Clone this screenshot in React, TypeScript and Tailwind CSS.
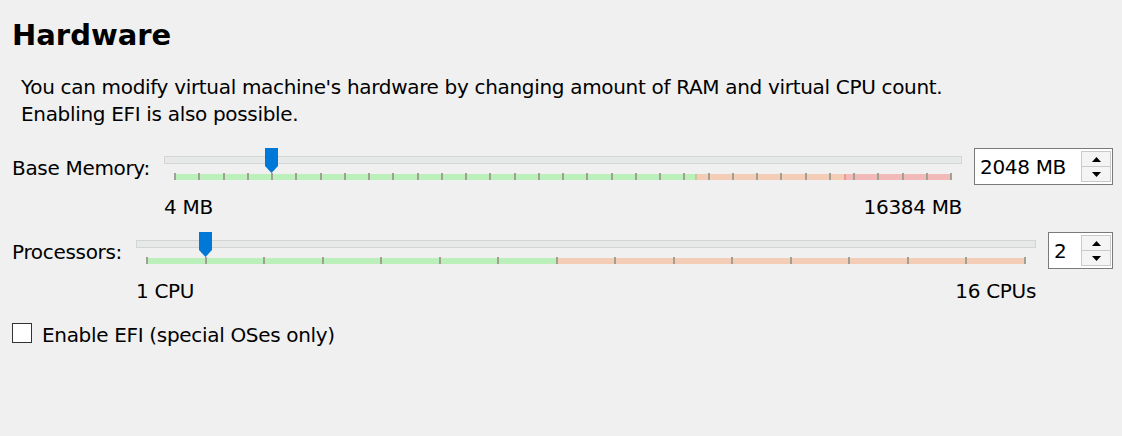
import React from "react";

type Seg = { w: number; color: string };

function Handle() {
  return (
    <svg width="13" height="25" viewBox="0 0 13 25" className="block">
      <polygon points="0,0 13,0 13,18 6.5,25 0,18" fill="#0078d7" />
    </svg>
  );
}

function Slider({
  frac,
  ticks,
  segments,
  marks,
  minLabel,
  maxLabel,
}: {
  frac: number;
  ticks: number;
  segments: Seg[];
  marks: { at: number; color: string }[];
  minLabel: string;
  maxLabel: string;
}) {
  return (
    <div className="flex-1 min-w-0 flex flex-col">
      <div className="relative h-[32px]">
        <div className="mt-[8px] h-[8px] border border-[#d3d5d5] bg-[#e7e9e9]" />
        <div className="relative mx-[10px] mt-[9px] h-[7px]">
          <div className="absolute left-0 right-0 top-[1px] h-[6px] flex">
            {segments.map((s, i) => (
              <div key={i} className="h-full" style={{ width: `${s.w * 100}%`, backgroundColor: s.color }} />
            ))}
          </div>
          {marks.map((m, i) => (
            <div
              key={i}
              className="absolute top-[1px] h-[6px] w-[2px]"
              style={{ left: `calc(${m.at * 100}% - 1px)`, backgroundColor: m.color }}
            />
          ))}
          <div className="absolute inset-0 flex justify-between">
            {Array.from({ length: ticks }).map((_, i) => (
              <div key={i} className="w-[2px] h-full bg-[#a29f95]" />
            ))}
          </div>
        </div>
        <div
          className="absolute top-0"
          style={{ left: `calc(10px + ${frac} * (100% - 22px) - 6px)` }}
        >
          <Handle />
        </div>
      </div>
      <div className="mt-[14px] flex justify-between leading-[27px]">
        <span>{minLabel}</span>
        <span>{maxLabel}</span>
      </div>
    </div>
  );
}

function Arrow({ up }: { up: boolean }) {
  return (
    <svg width="9" height="5" viewBox="0 0 9 5" className="block">
      {up ? <polygon points="4.5,0 9,5 0,5" fill="#000" /> : <polygon points="0,0 9,0 4.5,5" fill="#000" />}
    </svg>
  );
}

function Spin({ value, wide }: { value: string; wide: boolean }) {
  return (
    <div
      className={`${wide ? "w-[139px]" : "w-[65px]"} h-[37px] shrink-0 border border-[#7a7a7a] bg-white flex`}
    >
      <div className="flex-1 min-w-0 pl-[5px] pt-[5px] leading-[27px] whitespace-nowrap">{value}</div>
      <div className="mt-[2px] mr-[1px] w-[30px] h-[31px] border border-[#cacaca] bg-[#f4f4f4] flex flex-col">
        <div className="flex-1 flex items-center justify-center border-b border-[#cacaca]">
          <Arrow up />
        </div>
        <div className="flex-1 flex items-center justify-center">
          <Arrow up={false} />
        </div>
      </div>
    </div>
  );
}

export default function App() {
  return (
    <div className="w-[1122px] h-[436px] bg-[#f0f0f0] text-black font-['DejaVu_Sans',Verdana,sans-serif] text-[20px] tracking-[-0.32px] overflow-hidden">
      <div className="pl-[12px] pr-[9px] pt-[17px] flex flex-col">
        <h1 className="text-[29px] font-bold leading-[36px] tracking-normal">Hardware</h1>
        <div className="mt-[21px] pl-[9px] leading-[27px]">
          <p>You can modify virtual machine's hardware by changing amount of RAM and virtual CPU count.</p>
          <p>Enabling EFI is also possible.</p>
        </div>

        <div className="mt-[20px] flex items-start">
          <div className="w-[152px] shrink-0 mt-[7px] leading-[27px]">Base Memory:</div>
          <Slider
            frac={2044 / 16380}
            ticks={33}
            segments={[
              { w: 0.671, color: "#bbf0bb" },
              { w: 0.1915, color: "#f4cdb7" },
              { w: 0.1375, color: "#f2b9b9" },
            ]}
            marks={[
              { at: 0.671, color: "#c9c79b" },
              { at: 0.8625, color: "#ef9a90" },
            ]}
            minLabel="4 MB"
            maxLabel="16384 MB"
          />
          <div className="w-[12px] shrink-0" />
          <Spin value="2048 MB" wide />
        </div>

        <div className="mt-[11px] flex items-start">
          <div className="w-[124px] shrink-0 mt-[7px] leading-[27px]">Processors:</div>
          <Slider
            frac={1 / 15}
            ticks={16}
            segments={[
              { w: 0.467, color: "#bbf0bb" },
              { w: 0.533, color: "#f4cdb7" },
            ]}
            marks={[]}
            minLabel="1 CPU"
            maxLabel="16 CPUs"
          />
          <div className="w-[12px] shrink-0" />
          <Spin value="2" wide={false} />
        </div>

        <label className="mt-[17px] flex items-start gap-[10px]">
          <span className="mt-[1px] w-[20px] h-[20px] border border-[#333333] bg-white shrink-0" />
          <span className="leading-[27px]">Enable EFI (special OSes only)</span>
        </label>
      </div>
    </div>
  );
}
